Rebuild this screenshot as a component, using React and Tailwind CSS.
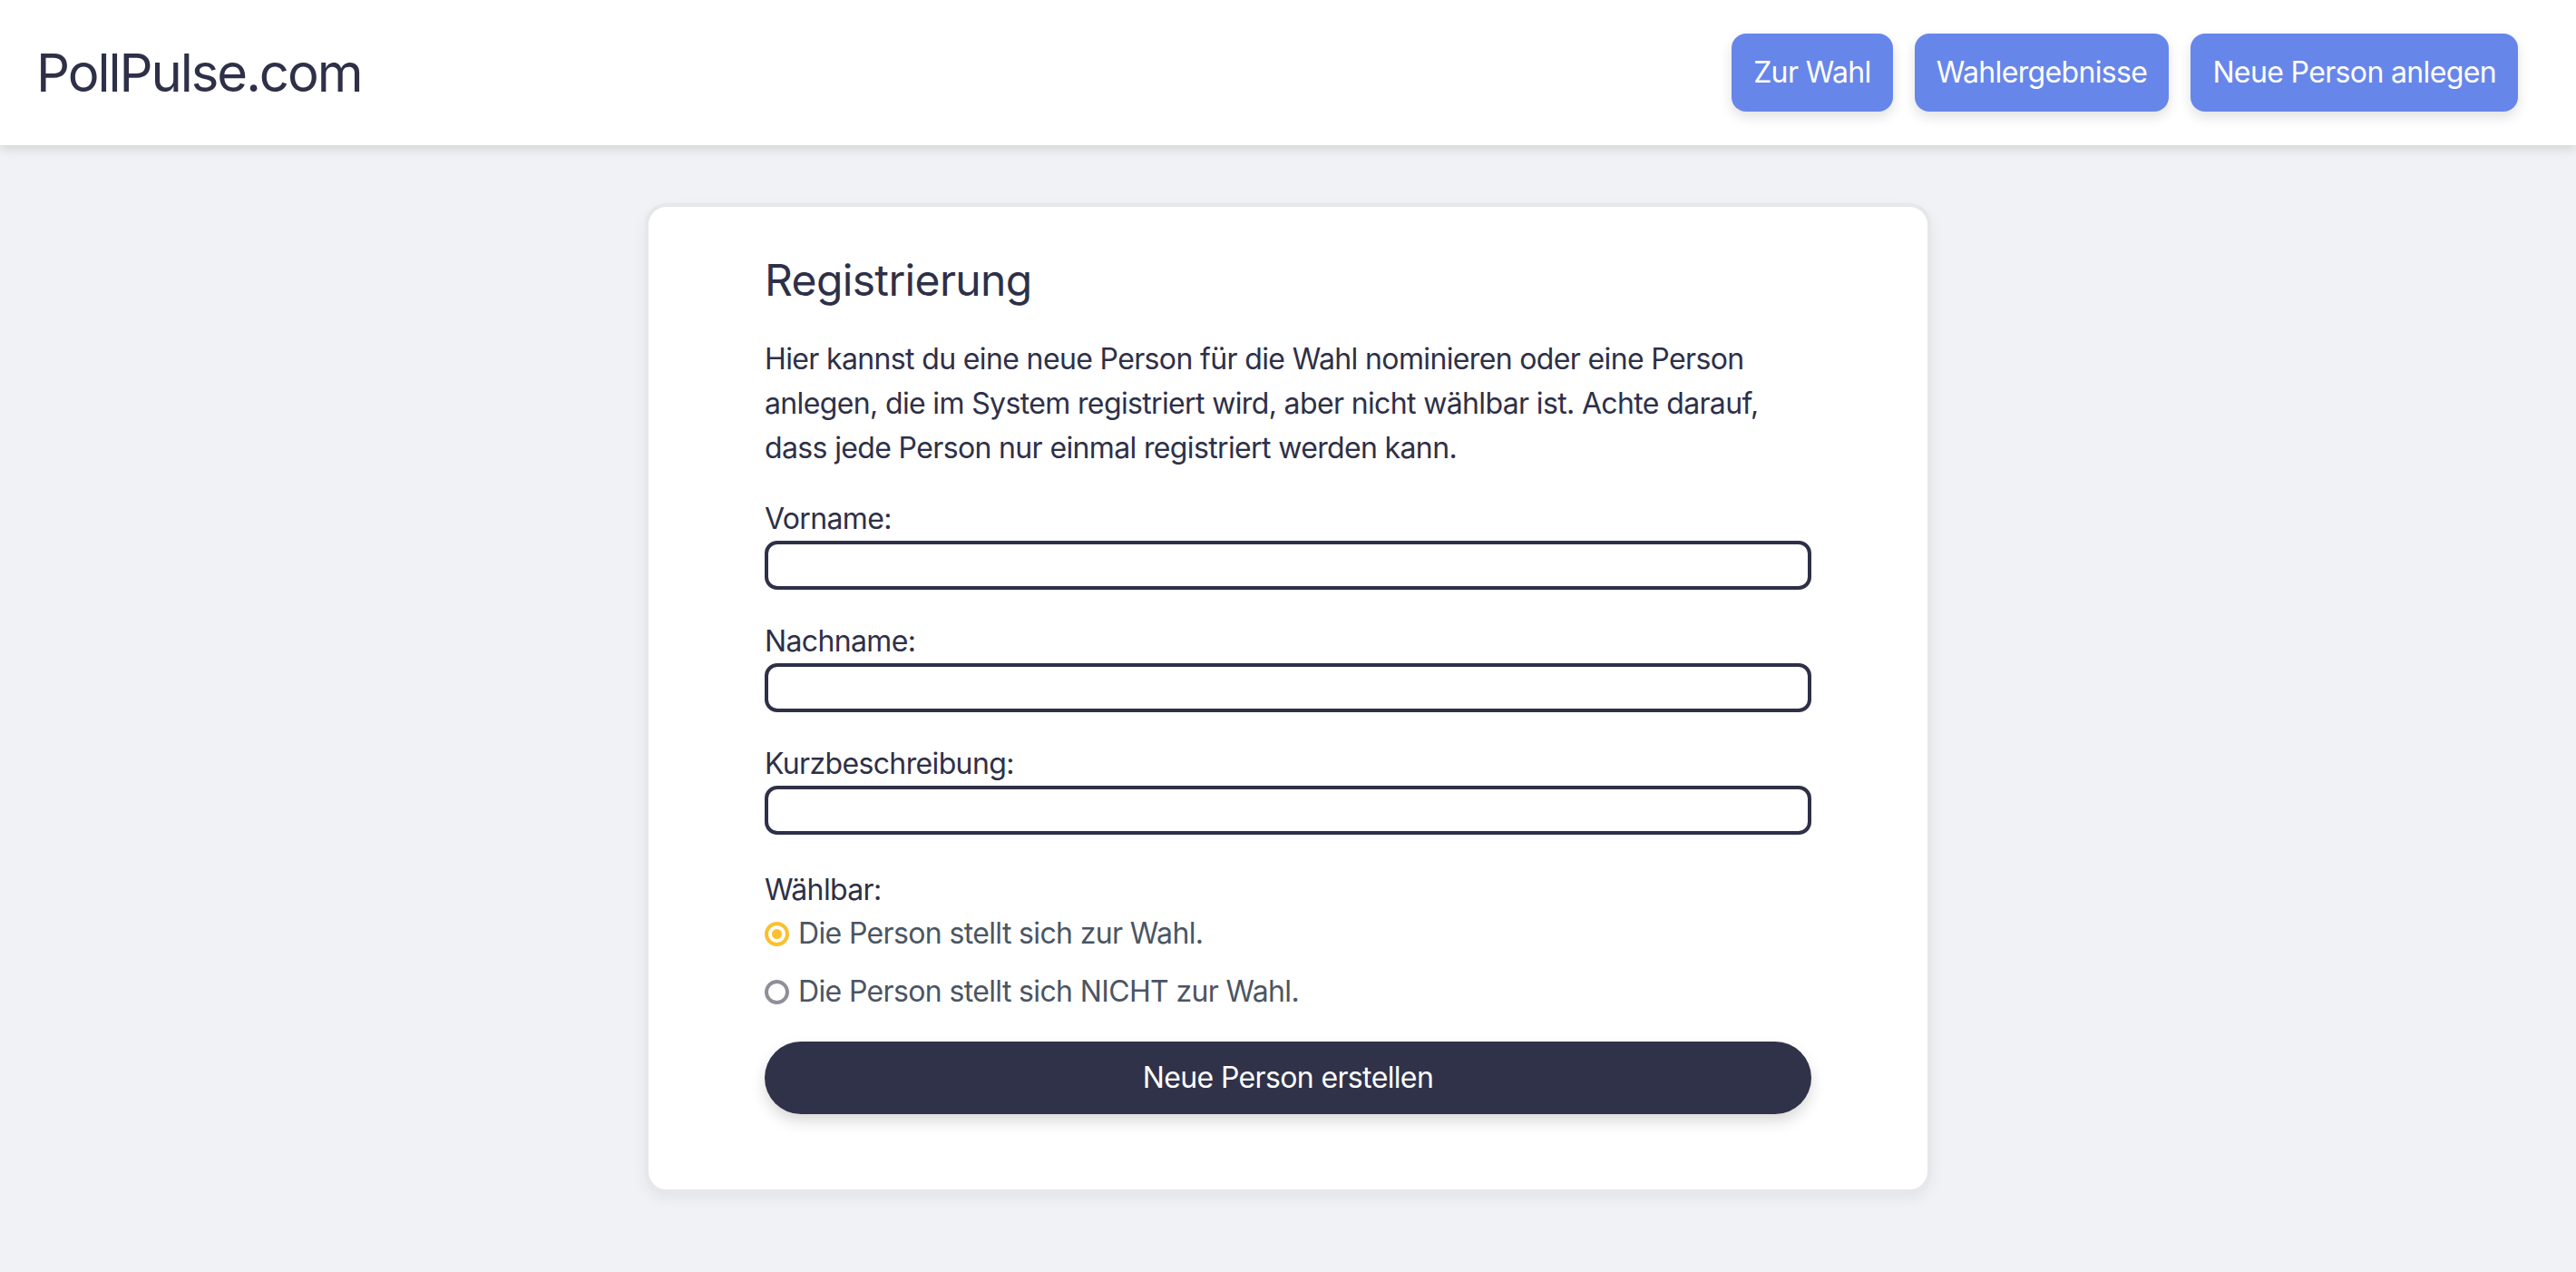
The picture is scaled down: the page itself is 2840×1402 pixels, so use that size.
import React, { useState } from 'react';

const navItems = ['Zur Wahl', 'Wahlergebnisse', 'Neue Person anlegen'];

const Field = ({ id, label }) => (
    <div className="flex flex-col">
        <label htmlFor={id} className="leading-[48px]">{label}</label>
        <input id={id} type="text" className="h-[54px] w-full border-4 border-[#2e3048] rounded-[14px] px-4 bg-white outline-none" />
    </div>
);

const Radio = ({ checked, label, onClick }) => (
    <div className="flex items-center gap-[10px] h-[48px] cursor-pointer" onClick={onClick}>
        {checked ? (
            <span className="w-[27px] h-[27px] rounded-full border-4 border-[#fbc02d] flex items-center justify-center shrink-0">
                <span className="w-[11px] h-[11px] rounded-full bg-[#fbc02d]" />
            </span>
        ) : (
            <span className="w-[27px] h-[27px] rounded-full border-4 border-[#8f8f9c] shrink-0" />
        )}
        <span className="text-[#4b5563]">{label}</span>
    </div>
);

const App = () => {
    const [electable, setElectable] = useState(true);

    return (
        <div className="min-h-screen bg-[#f1f2f5] text-[#2e3048] font-['Inter',sans-serif] text-[32px] tracking-[-0.02em]">
            <header className="h-[160px] bg-white flex items-center justify-between pl-10 pr-[64px] shadow-[0_4px_12px_rgba(0,0,0,0.13)]">
                <h1 className="text-[58px] leading-none tracking-[-0.035em]">PollPulse.com</h1>
                <nav className="flex gap-6">
                    {navItems.map((item) => (
                        <button key={item} className="h-[86px] px-6 rounded-[16px] bg-[#6786ea] text-white shadow-[0_6px_14px_rgba(0,0,0,0.12)]">
                            {item}
                        </button>
                    ))}
                </nav>
            </header>

            <main className="pt-16 pb-16">
                <div className="w-[1418px] mx-auto bg-white border-4 border-[#e6e7eb] rounded-[24px] shadow-[0_6px_16px_rgba(0,0,0,0.06)] pt-[49px] px-[128px] pb-[83px]">
                    <h2 className="text-[48px] leading-[64px]">Registrierung</h2>
                    <p className="mt-[30px] leading-[49px]">
                        Hier kannst du eine neue Person für die Wahl nominieren oder eine Person anlegen, die im System registriert wird, aber nicht wählbar ist. Achte darauf, dass jede Person nur einmal registriert werden kann.
                    </p>

                    <form className="mt-[30px]" onSubmit={(e) => e.preventDefault()}>
                        <div className="flex flex-col gap-[33px]">
                            <Field id="vorname" label="Vorname:" />
                            <Field id="nachname" label="Nachname:" />
                            <Field id="kurz" label="Kurzbeschreibung:" />
                        </div>

                        <div className="mt-[37px]">
                            <p className="leading-[48px]">Wählbar:</p>
                            <div className="flex flex-col gap-4">
                                <Radio checked={electable} onClick={() => setElectable(true)} label="Die Person stellt sich zur Wahl." />
                                <Radio checked={!electable} onClick={() => setElectable(false)} label="Die Person stellt sich NICHT zur Wahl." />
                            </div>
                        </div>

                        <button type="submit" className="mt-[31px] w-full h-[80px] rounded-full bg-[#303249] text-white shadow-[0_8px_16px_rgba(0,0,0,0.15)]">
                            Neue Person erstellen
                        </button>
                    </form>
                </div>
            </main>
        </div>
    );
};

export default App;
